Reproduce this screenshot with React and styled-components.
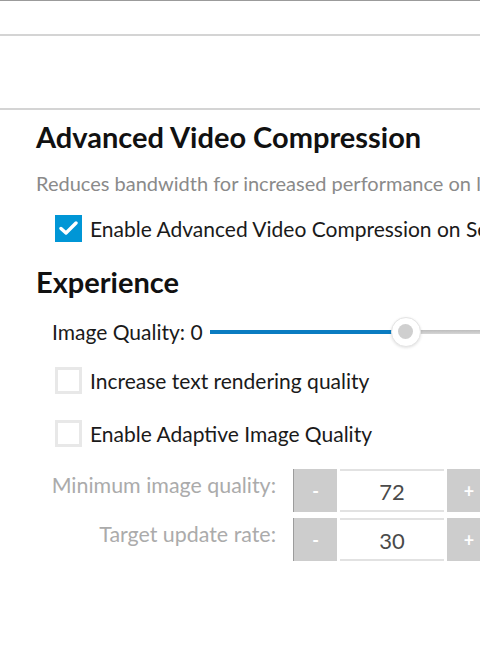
import React from 'react';
import styled, { createGlobalStyle } from 'styled-components';

const GlobalStyle = createGlobalStyle`
  html, body {
    margin: 0;
    padding: 0;
    background: #fff;
    overflow: hidden;
  }
  body {
    font-family: Lato, "Noto Sans", sans-serif;
  }
`;

const Frame = styled.div`
  width: 640px;
`;

const TopBar = styled.div`
  height: 33px;
  border-top: 1px solid #9b9b9b;
  border-bottom: 2px solid #d4d4d4;
`;

const SubBar = styled.div`
  height: 72px;
  border-bottom: 2px solid #d4d4d4;
`;

const Content = styled.div`
  padding: 10px 0 0 36px;
  display: flex;
  flex-direction: column;
`;

const Heading = styled.h2`
  margin: ${({ $top }) => $top || 0}px 0 0;
  font-size: 29px;
  line-height: 34px;
  font-weight: 700;
  color: #111;
  white-space: nowrap;
`;

const Description = styled.p`
  margin: 17px 0 0;
  font-size: 20px;
  line-height: 24px;
  color: #8a8a8a;
  white-space: nowrap;
`;

const CheckRow = styled.label`
  display: flex;
  align-items: center;
  gap: 8px;
  margin: ${({ $top }) => $top}px 0 0 19px;
  font-size: 21px;
  color: #1a1a1a;
  white-space: nowrap;
`;

const Box = styled.span`
  box-sizing: border-box;
  width: 27px;
  height: 27px;
  flex: none;
  display: flex;
  align-items: center;
  justify-content: center;
  background: ${({ $checked }) => ($checked ? '#0096d6' : '#fff')};
  border: 3px solid ${({ $checked }) => ($checked ? '#0096d6' : '#e8e8e8')};
`;

const SliderRow = styled.div`
  display: flex;
  align-items: center;
  gap: 7px;
  margin: 20px 0 0 16px;
`;

const SliderLabel = styled.span`
  font-size: 21px;
  color: #1a1a1a;
  white-space: nowrap;
`;

const Track = styled.div`
  position: relative;
  flex: 1;
  height: 4px;
  background: linear-gradient(#bdbdbd, #d6d6d6);
`;

const Fill = styled.div`
  height: 100%;
  background: #0a7cc1;
`;

const Thumb = styled.div`
  position: absolute;
  top: 50%;
  box-sizing: border-box;
  width: 30px;
  height: 30px;
  margin: -15px 0 0 -15px;
  border-radius: 50%;
  background: #fff;
  border: 1px solid #e4e4e4;
  box-shadow: 0 1px 3px rgba(0, 0, 0, 0.12);
  display: flex;
  align-items: center;
  justify-content: center;

  &::after {
    content: '';
    width: 15px;
    height: 15px;
    border-radius: 50%;
    background: #cfcfcf;
  }
`;

const SpinGrid = styled.div`
  display: grid;
  grid-template-columns: 240px auto;
  column-gap: 17px;
  row-gap: 6px;
  margin-top: 22px;
`;

const SpinLabel = styled.span`
  text-align: right;
  font-size: 21.4px;
  line-height: 26px;
  padding-top: 3px;
  color: #ababab;
  white-space: nowrap;
`;

const Spinner = styled.div`
  display: flex;
  gap: 3px;
  height: 43px;
`;

const SpinButton = styled.div`
  box-sizing: border-box;
  width: 44px;
  display: flex;
  align-items: center;
  justify-content: center;
  background: #cdcdcd;
  border-left: ${({ $edge }) => ($edge ? '1px solid #9c9c9c' : 'none')};
  color: #fff;
  font-size: 18px;
  font-weight: 700;
`;

const SpinValue = styled.div`
  box-sizing: border-box;
  width: 104px;
  display: flex;
  align-items: center;
  justify-content: center;
  border-top: 2px solid #e2e2e2;
  border-bottom: 2px solid #e2e2e2;
  font-size: 22px;
  color: #4a4a4a;
  padding-top: 2px;
`;

const Check = () => (
  <svg width="19" height="15" viewBox="0 0 19 15">
    <path d="M2 7.5 L7 12 L17 2" fill="none" stroke="#fff" strokeWidth="3.4" strokeLinecap="round" strokeLinejoin="round" />
  </svg>
);

const CheckItem = ({ checked, top, children }) => (
  <CheckRow $top={top}>
    <Box $checked={checked}>{checked && <Check />}</Box>
    {children}
  </CheckRow>
);

const SpinField = ({ label, value }) => (
  <>
    <SpinLabel>{label}</SpinLabel>
    <Spinner>
      <SpinButton $edge>-</SpinButton>
      <SpinValue>{value}</SpinValue>
      <SpinButton>+</SpinButton>
    </Spinner>
  </>
);

const App = () => {
  const thumbAt = 196;

  return (
    <Frame>
      <GlobalStyle />
      <TopBar />
      <SubBar />
      <Content>
        <Heading>Advanced Video Compression</Heading>
        <Description>Reduces bandwidth for increased performance on low bandwidth networks</Description>
        <CheckItem checked top={20}>Enable Advanced Video Compression on Sender</CheckItem>
        <Heading $top={23}>Experience</Heading>
        <SliderRow>
          <SliderLabel>Image Quality: 0</SliderLabel>
          <Track>
            <Fill style={{ width: thumbAt }} />
            <Thumb style={{ left: thumbAt }} />
          </Track>
        </SliderRow>
        <CheckItem top={23}>Increase text rendering quality</CheckItem>
        <CheckItem top={26}>Enable Adaptive Image Quality</CheckItem>
        <SpinGrid>
          <SpinField label="Minimum image quality:" value="72" />
          <SpinField label="Target update rate:" value="30" />
        </SpinGrid>
      </Content>
    </Frame>
  );
};

export default App;
